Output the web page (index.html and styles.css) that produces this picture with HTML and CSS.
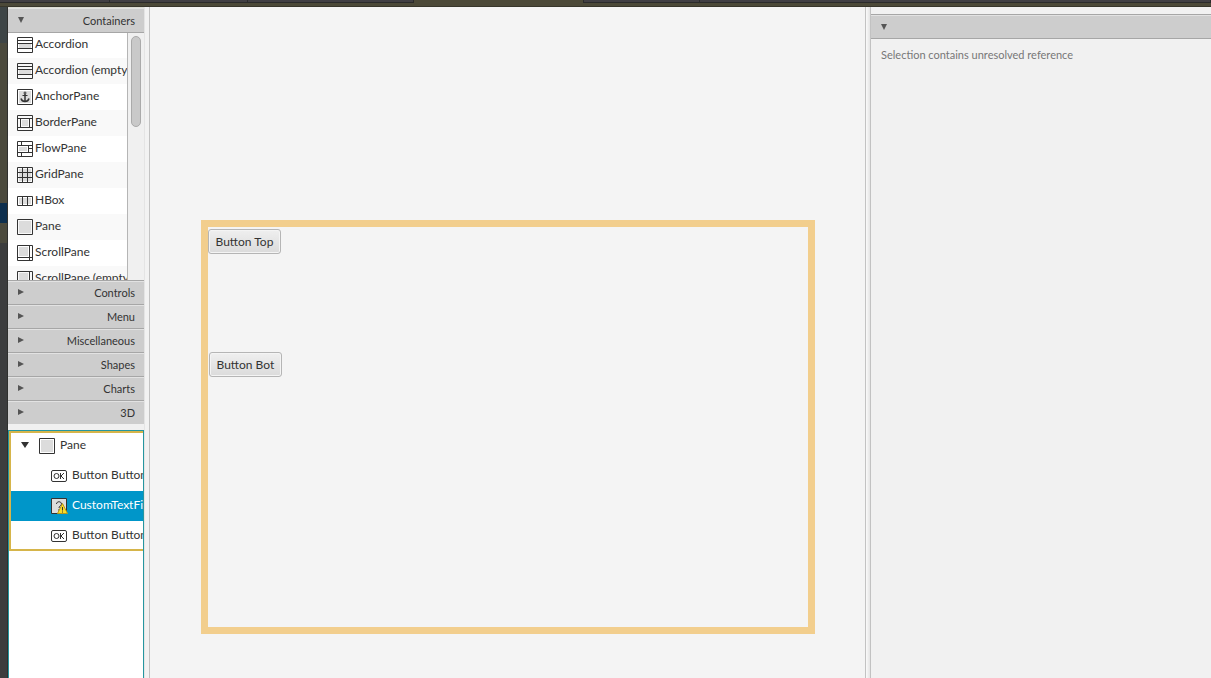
FILE: index.html
```html
<!DOCTYPE html>
<html lang="en">
<head>
  <meta charset="UTF-8">
  <title>Scene Builder</title>
  <link rel="stylesheet" href="styles.css">
</head>
<body>
  <div class="tabs">
    <span class="tab"></span>
    <span class="tab"></span>
    <span class="tab"></span>
    <span class="tab active"></span>
    <span class="tab"></span>
    <span class="tab last"></span>
  </div>

  <div class="editor">
    <div class="gutter"></div>

    <aside class="sidebar">
      <section class="library">
        <button class="title open"><svg class="arrow" viewBox="0 0 8 8"><path d="M1 1h6L4 7z"/></svg>Containers</button>
        <div class="list-view">
          <ul class="items">
            <li><svg class="icon" viewBox="0 0 16 16"><path class="fill" d="M2 6h12v5H2z"/><path d="M.5 .5h15v15H.5zM.5 3.5h15M.5 6.5h15M.5 11.5h15"/></svg>Accordion</li>
            <li><svg class="icon" viewBox="0 0 16 16"><path class="fill" d="M2 6h12v5H2z"/><path d="M.5 .5h15v15H.5zM.5 3.5h15M.5 6.5h15M.5 11.5h15"/></svg>Accordion (empty)</li>
            <li><svg class="icon" viewBox="0 0 16 16"><path class="fill" d="M2 2h12v12H2z"/><path d="M.5 .5h15v15H.5zM5.5 6.5h5"/><path class="bold" d="M8 5v7M4 9.5c.5 2 1.500 3 4 3s3.500-1 4-3"/><circle cx="8" cy="4" r="1"/></svg>AnchorPane</li>
            <li><svg class="icon" viewBox="0 0 16 16"><path class="fill" d="M5 5h6v6H5z"/><path d="M.5 .5h15v15H.5zM.5 3.5h15M.5 12.5h15M3.5 3.5v9M12.5 3.5v9"/></svg>BorderPane</li>
            <li><svg class="icon" viewBox="0 0 16 16"><path class="fill" d="M2 6h8v4H2z"/><path d="M.5 .5h15v15H.5zM.5 4.5h15M.5 11.5h15M4.5 .5v4M11.5 4.5v7M4.5 11.5v4M11.5 7.5h4"/></svg>FlowPane</li>
            <li><svg class="icon" viewBox="0 0 16 16"><path class="fill" d="M2 2h12v12H2z"/><path d="M.5 .5h15v15H.5zM.5 5.5h15M.5 10.5h15M5.5 .5v15M10.5 .5v15"/></svg>GridPane</li>
            <li><svg class="icon" viewBox="0 0 16 16"><path class="fill" d="M2 5h12v6H2z"/><path d="M.5 3.5h15v9H.5zM5.5 3.5v9M10.5 3.5v9"/></svg>HBox</li>
            <li><svg class="icon" viewBox="0 0 16 16"><path class="fill" d="M2 2h12v12H2z"/><path d="M.5 .5h15v15H.5z"/></svg>Pane</li>
            <li><svg class="icon" viewBox="0 0 16 16"><path class="fill" d="M2 2h9v9H2z"/><path d="M.5 .5h15v15H.5zM12.5 .5v15M.5 12.5h15"/></svg>ScrollPane</li>
            <li><svg class="icon" viewBox="0 0 16 16"><path class="fill" d="M2 2h9v9H2z"/><path d="M.5 .5h15v15H.5zM12.5 .5v15M.5 12.5h15"/></svg>ScrollPane (empty)</li>
          </ul>
          <div class="scrollbar"><div class="thumb"></div></div>
        </div>
        <button class="title"><svg class="arrow" viewBox="0 0 8 8"><path d="M1 0v6l6-3z"/></svg>Controls</button>
        <button class="title"><svg class="arrow" viewBox="0 0 8 8"><path d="M1 0v6l6-3z"/></svg>Menu</button>
        <button class="title"><svg class="arrow" viewBox="0 0 8 8"><path d="M1 0v6l6-3z"/></svg>Miscellaneous</button>
        <button class="title"><svg class="arrow" viewBox="0 0 8 8"><path d="M1 0v6l6-3z"/></svg>Shapes</button>
        <button class="title"><svg class="arrow" viewBox="0 0 8 8"><path d="M1 0v6l6-3z"/></svg>Charts</button>
        <button class="title"><svg class="arrow" viewBox="0 0 8 8"><path d="M1 0v6l6-3z"/></svg>3D</button>
      </section>

      <section class="hierarchy">
        <ul class="tree">
          <li class="root"><svg class="disclosure" viewBox="0 0 8 8"><path d="M0 1h8L4 7z"/></svg><svg class="icon" viewBox="0 0 16 16"><path class="fill" d="M2 2h12v12H2z"/><path d="M.5 .5h15v15H.5z"/></svg>Pane</li>
          <li><svg class="icon" viewBox="0 0 16 16"><rect x=".5" y="2.5" width="15" height="11" rx="1.5"/><circle cx="5.5" cy="8" r="2.5"/><path d="M9.5 5v6M13 5L10 8l3 3"/></svg>Button Button Top</li>
          <li class="selected"><svg class="icon" viewBox="0 0 16 16"><path class="page" d="M.5 .5h15v15H.5z"/><path d="M5.5 6c0-3 5-3 5 0 0 2-2.5 1.500-2.5 4M8 11v2"/><path class="warning" d="M11.5 5.5L6.5 15.5h10z"/><path d="M11.5 9v3.5M11.5 13.5v1"/></svg>CustomTextField</li>
          <li><svg class="icon" viewBox="0 0 16 16"><rect x=".5" y="2.5" width="15" height="11" rx="1.5"/><circle cx="5.5" cy="8" r="2.5"/><path d="M9.5 5v6M13 5L10 8l3 3"/></svg>Button Button Bot</li>
        </ul>
      </section>
    </aside>

    <div class="divider left"></div>

    <main class="content">
      <div class="pane">
        <button class="fx-button top">Button Top</button>
        <button class="fx-button bot">Button Bot</button>
      </div>
    </main>

    <div class="divider"></div>

    <aside class="inspector">
      <button class="title open" aria-label="Properties"><svg class="arrow" viewBox="0 0 8 8"><path d="M1 1h6L4 7z"/></svg></button>
      <p class="message">Selection contains unresolved reference</p>
    </aside>
  </div>
</body>
</html>
```
FILE: styles.css
```css
* {
  box-sizing: border-box;
}
body {
  font-family: Lato, "Open Sans", sans-serif;
  font-size: 12px;
  color: #333;
  background: #f4f4f4;
  margin: 0;
  height: 100vh;
  display: flex;
  flex-direction: column;
  overflow: hidden;
}
ul {
  list-style: none;
  margin: 0;
  padding: 0;
}
button {
  font: inherit;
  color: inherit;
}

/* editor tabs above the builder */
.tabs {
  display: grid;
  grid-template-columns: 110px 138px 166px 170px 116px 1fr;
  flex: none;
  height: 7px;
  background: #4c4938;
  border-bottom: 1px solid #38362b;
}
.tab {
  height: 3px;
  background: #413f43;
  border-right: 1px solid #2b2b2b;
  border-bottom: 1px solid #2b2b2b;
}
.tab.active {
  background: #4c4938;
  border-bottom: none;
}
.editor {
  display: flex;
  flex: 1;
  min-height: 0;
}
.gutter {
  flex: none;
  width: 8px;
  border-right: 1px solid #2f302e;
  background: linear-gradient(#3e4546 36px, #4b4a3d 36px, #4b4a3d 196px, #0d2f4e 196px, #0d2f4e 216px, #4b4a3d 216px, #4b4a3d 236px, #3c3d3e 236px);
}

.sidebar {
  display: flex;
  flex-direction: column;
  flex: none;
  width: 136px;
  border-top: 1px solid #dcdcd2;
  background: #f0f0f0;
}
.title {
  display: flex;
  align-items: center;
  justify-content: space-between;
  width: 100%;
  height: 24px;
  padding: 0 9px;
  font-size: 11px;
  border: none;
  border-top: 1px solid #a6a6a6;
  background: #cdcdcd;
  box-shadow: inset 0 1px #e2e2e2;
}
.title.open {
  height: 25px;
  border-top: none;
  border-bottom: 1px solid #a6a6a6;
}
.arrow {
  width: 8px;
  height: 8px;
  fill: #555;
}
.list-view {
  display: flex;
  height: 247px;
  overflow: hidden;
}
.items {
  flex: 1;
  min-width: 0;
  margin-top: -1px;
  overflow: hidden;
  background: #fff;
  border-right: 1px solid #b5b5b5;
}
.items li {
  display: flex;
  align-items: center;
  gap: 2px;
  height: 26px;
  padding: 0 0 2px 9px;
  line-height: 20px;
  white-space: nowrap;
}
.items li:nth-child(even) {
  background: #f9f9f9;
}
.icon {
  flex: none;
  width: 16px;
  height: 16px;
  margin-top: 2px;
  fill: none;
  stroke: #333;
}
.icon .fill {
  fill: #dcdcdc;
  stroke: none;
}
.icon .bold {
  stroke-width: 1.5;
}
.icon .page {
  fill: #ddd;
}
.icon .warning {
  fill: #f7dc2b;
  stroke: #b89a18;
}
.scrollbar {
  width: 16px;
  padding: 3px 3px 0 3px;
  background: #f0f0f0;
}
.thumb {
  width: 10px;
  height: 91px;
  border: 1px solid #aaa;
  border-radius: 5px;
  background: #c9c9c9;
}

.hierarchy {
  flex: 1;
  margin-top: 6px;
  background: #fff;
  border: 1px solid #2596a0;
  border-bottom: none;
  overflow: hidden;
}
.tree {
  border-left: 2px solid #d6b54a;
  box-shadow: inset 0 2px #d6b54a, inset 0 -2px #d6b54a;
}
.tree li {
  display: flex;
  align-items: center;
  gap: 5px;
  height: 30px;
  padding: 0 0 2px 40px;
  line-height: 20px;
  white-space: nowrap;
}
.tree .root {
  padding-left: 10px;
}
.disclosure {
  width: 8px;
  height: 8px;
  margin-right: 5px;
  fill: #333;
}
.tree .selected {
  background: #0096c9;
  color: #fff;
}
.selected .icon {
  overflow: visible;
}

.divider {
  flex: none;
  width: 6px;
  border-left: 1px solid #c2c2c2;
  border-right: 1px solid #c2c2c2;
  background: linear-gradient(to right, #fafafa, #e4e4e4);
}
.divider.left {
  border-left-color: #e4e4e4;
  background: #f2f2f2;
}
.content {
  display: flex;
  flex: 1;
  align-items: flex-start;
  justify-content: center;
  padding-top: 213px;
  background: #f4f4f4;
}
.pane {
  position: relative;
  width: 614px;
  height: 414px;
  border: 7px solid #f2ce8d;
}
.fx-button {
  position: absolute;
  height: 25px;
  padding: 0 7px;
  border: 1px solid #b5b5b5;
  border-radius: 3px;
  background: linear-gradient(#efefef, #dbdbdb);
  box-shadow: inset 0 0 0 1px #f4f4f4;
}
.fx-button.top {
  left: 0;
  top: 2px;
}
.fx-button.bot {
  left: 1px;
  top: 125px;
}

.inspector {
  flex: none;
  width: 340px;
  padding-top: 7px;
  background: #f1f1f1;
}
.inspector .title {
  border-top: 1px solid #a6a6a6;
}
.message {
  margin: 0;
  padding: 8px 10px;
  font-size: 11px;
  line-height: 16px;
  color: #777;
}
```
